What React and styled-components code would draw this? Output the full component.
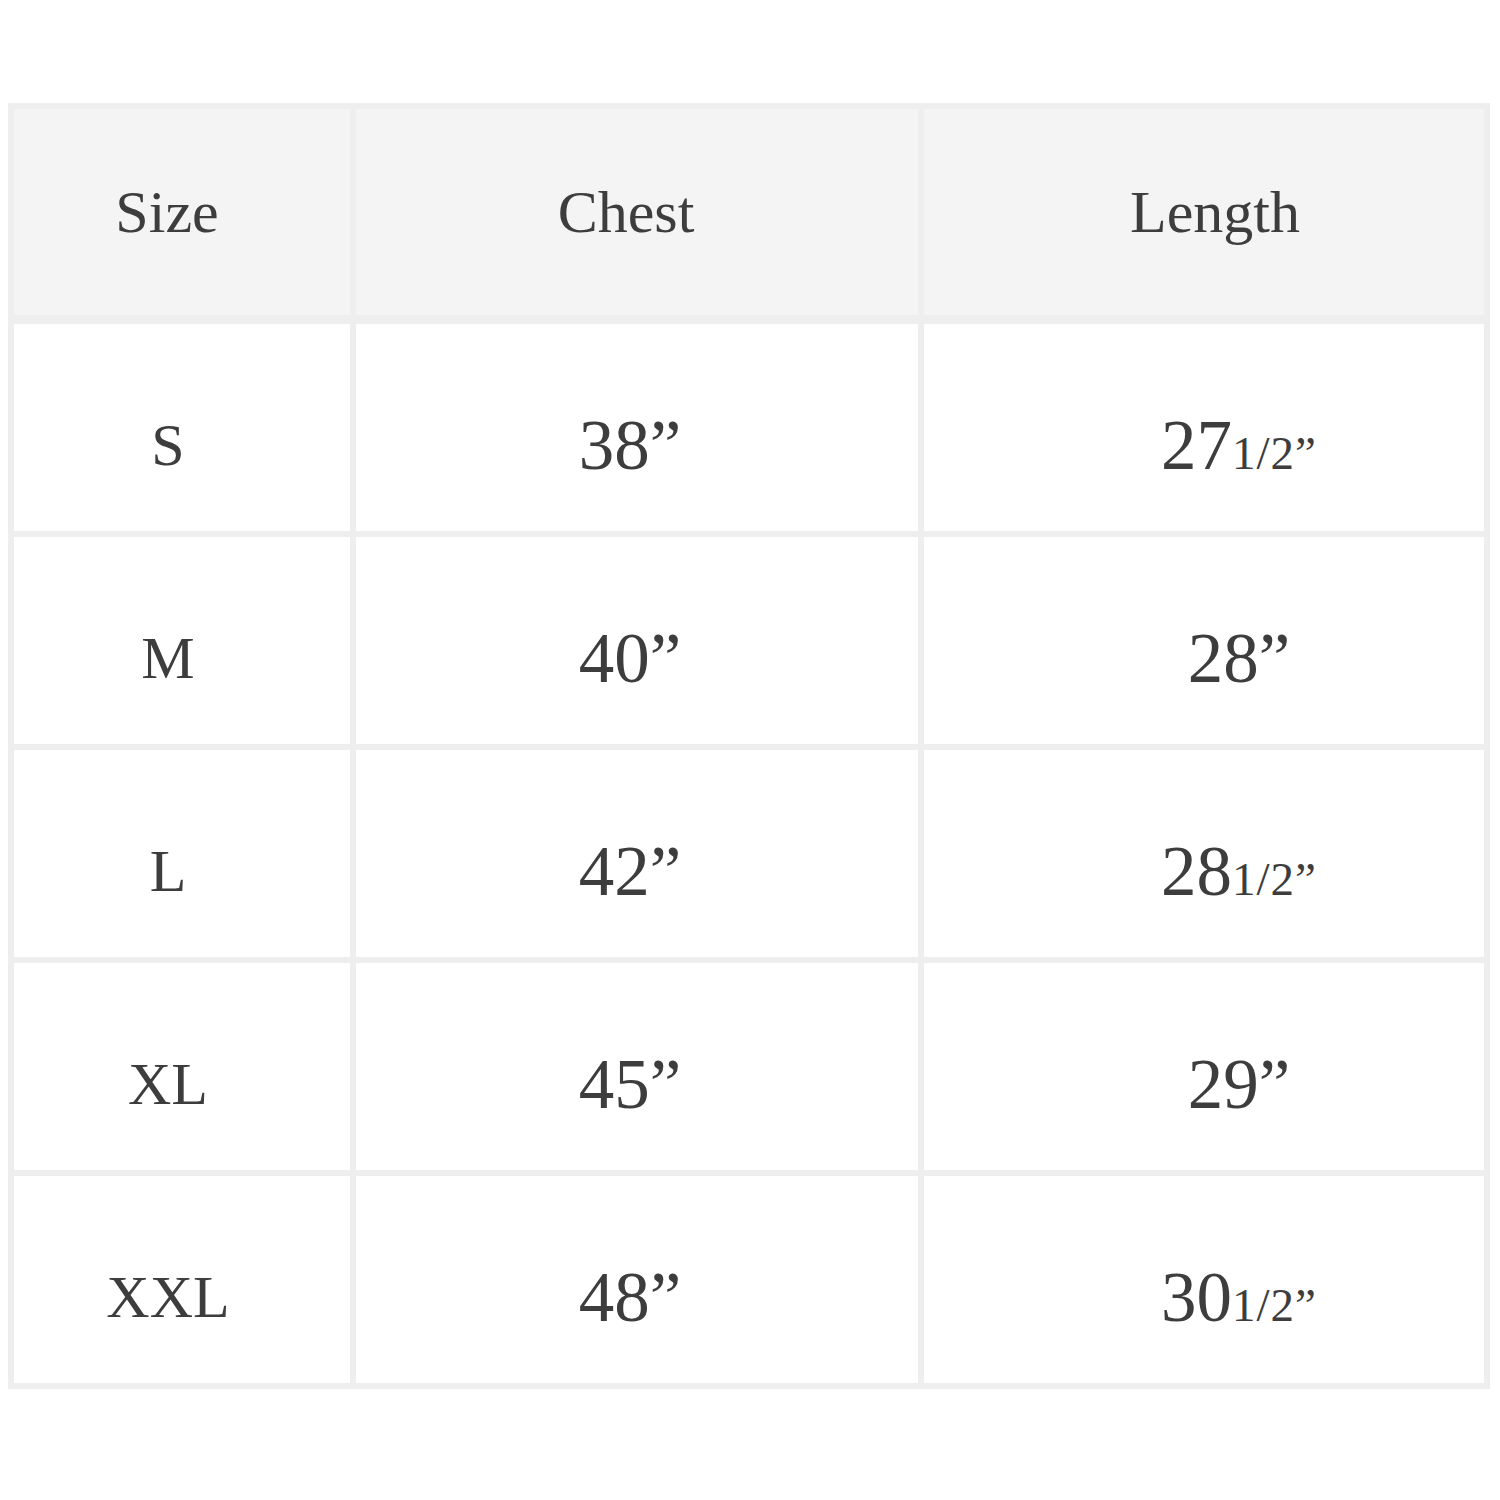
import React from 'react';
import styled, { createGlobalStyle } from 'styled-components';

const GlobalStyle = createGlobalStyle`
  html, body {
    margin: 0;
    padding: 0;
    background: #ffffff;
  }
`;

const Page = styled.div`
  padding: 103px 8px 0 8px;
  font-family: "Liberation Serif", "Times New Roman", serif;
`;

const Table = styled.table`
  width: 1482px;
  border-collapse: collapse;
  table-layout: fixed;
  border: 6px solid #eeeeee;
`;

// offset moves the text off the cell centre (positive = right)
const shift = (o = 0) =>
  o >= 0 ? `padding: 0 0 0 ${o * 2}px;` : `padding: 0 ${-o * 2}px 0 0;`;

const HeadCell = styled.th`
  height: 206px;
  background: #f4f4f4;
  border: 6px solid #eeeeee;
  border-bottom-width: 9px;
  font-weight: normal;
  font-size: 60px;
  color: #3d3d3d;
  text-align: center;
  vertical-align: middle;
  ${(p) => shift(p.$offset)}
`;

const Cell = styled.td`
  height: 171px;
  background: #ffffff;
  border: 6px solid #eeeeee;
  font-size: ${(p) => (p.$numeric ? 71 : 60)}px;
  color: #3d3d3d;
  text-align: center;
  vertical-align: middle;
  ${(p) => shift(p.$offset)}
  padding-top: 36px;
`;

const Fraction = styled.span`
  font-size: 47px;
  letter-spacing: 1px;
`;

const rows = [
  { size: 'S', chest: '38”', length: '27', half: true },
  { size: 'M', chest: '40”', length: '28”' },
  { size: 'L', chest: '42”', length: '28', half: true },
  { size: 'XL', chest: '45”', length: '29”' },
  { size: 'XXL', chest: '48”', length: '30', half: true },
];

const SizeChart = () => {
  return (
    <Page>
      <Table>
        <colgroup>
          <col style={{ width: '342px' }} />
          <col style={{ width: '568px' }} />
          <col />
        </colgroup>
        <thead>
          <tr>
            <HeadCell $offset={-15}>Size</HeadCell>
            <HeadCell $offset={-11}>Chest</HeadCell>
            <HeadCell $offset={11}>Length</HeadCell>
          </tr>
        </thead>
        <tbody>
          {rows.map((r) => (
            <tr key={r.size}>
              <Cell $offset={-14}>{r.size}</Cell>
              <Cell $numeric $offset={-7}>{r.chest}</Cell>
              <Cell $numeric $offset={35}>
                {r.length}
                {r.half && <Fraction>1/2”</Fraction>}
              </Cell>
            </tr>
          ))}
        </tbody>
      </Table>
    </Page>
  );
};

export default function App() {
  return (
    <>
      <GlobalStyle />
      <SizeChart />
    </>
  );
}
